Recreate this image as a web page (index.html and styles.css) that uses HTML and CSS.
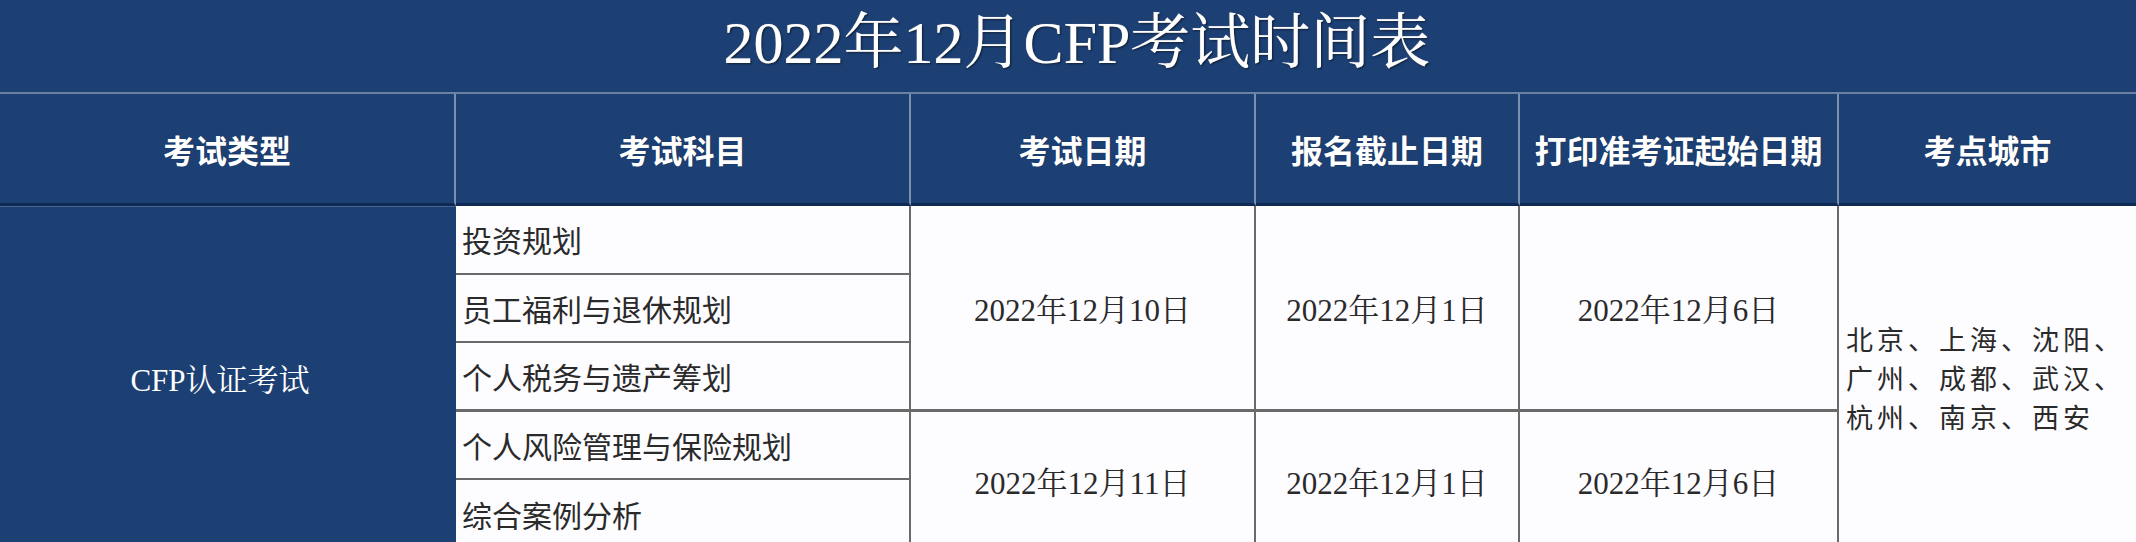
FILE: index.html
```html
<!DOCTYPE html>
<html lang="zh-CN">
<head>
<meta charset="utf-8">
<title>2022年12月CFP考试时间表</title>
<link rel="stylesheet" href="styles.css">
</head>
<body>
<div class="sheet">
  <div class="title">2022年12月CFP考试时间表</div>
  <div class="grid">
    <div class="hd">考试类型</div>
    <div class="hd">考试科目</div>
    <div class="hd">考试日期</div>
    <div class="hd">报名截止日期</div>
    <div class="hd">打印准考证起始日期</div>
    <div class="hd last">考点城市</div>

    <div class="type">CFP认证考试</div>

    <div class="subj r1">投资规划</div>
    <div class="subj r2">员工福利与退休规划</div>
    <div class="subj r3 sep">个人税务与遗产筹划</div>
    <div class="subj r4">个人风险管理与保险规划</div>
    <div class="subj r5">综合案例分析</div>

    <div class="date c3 g1 sep">2022年12月10日</div>
    <div class="date c4 g1 sep">2022年12月1日</div>
    <div class="date c5 g1 sep">2022年12月6日</div>

    <div class="date c3 g2">2022年12月11日</div>
    <div class="date c4 g2">2022年12月1日</div>
    <div class="date c5 g2">2022年12月6日</div>

    <div class="cities">北京、上海、沈阳、<br>广州、成都、武汉、<br>杭州、南京、西安</div>
  </div>
</div>
</body>
</html>
```

FILE: styles.css
```css
html, body {
  margin: 0;
  padding: 0;
  background: #ffffff;
}

.sheet {
  width: 2136px;
  font-family: "Liberation Serif", "Noto Serif CJK SC", "Noto Sans CJK SC", serif;
}

.title {
  height: 92px;
  background: #1c3f74;
  color: #ffffff;
  font-size: 60px;
  line-height: 86px;
  text-align: center;
  padding-left: 18px;
  border-bottom: 2px solid #6c80a4;
  text-shadow: 1px 1px 2px rgba(0, 0, 0, 0.6), 0 0 1px rgba(255, 255, 255, 0.6);
}

.grid {
  display: grid;
  grid-template-columns: 456px 455px 345px 264px 319px 1fr;
  grid-template-rows: 112px repeat(5, 68.6px);
}

.hd {
  background: #1c3f74;
  color: #ffffff;
  font-family: "Noto Sans CJK SC", sans-serif;
  font-weight: 700;
  font-size: 32px;
  display: flex;
  align-items: center;
  justify-content: center;
  border-right: 2px solid #7d8fae;
  border-bottom: 3px solid #0f2a52;
  box-sizing: border-box;
  text-shadow: 0 0 1px rgba(0, 0, 0, 0.4);
}

.hd.last {
  border-right: none;
}

.type {
  grid-column: 1;
  grid-row: 2 / span 5;
  background: #1c3f74;
  color: #ffffff;
  font-size: 31px;
  display: flex;
  align-items: center;
  justify-content: center;
  padding-right: 16px;
  border-top: 1px solid #4a6390;
  box-sizing: border-box;
}

.subj {
  grid-column: 2;
  background: #fdfcff;
  color: #2a2a2a;
  font-family: "Noto Sans CJK SC", sans-serif;
  font-size: 30px;
  display: flex;
  align-items: center;
  padding-left: 6px;
  border-bottom: 2px solid #6a6a6a;
  border-right: 2px solid #6a6a6a;
  box-sizing: border-box;
}

.subj.sep {
  border-bottom-width: 3px;
}

.r1 { grid-row: 2; }
.r2 { grid-row: 3; }
.r3 { grid-row: 4; }
.r4 { grid-row: 5; }
.r5 { grid-row: 6; }

.date {
  background: #fdfcff;
  color: #2a2a2a;
  font-size: 31px;
  display: flex;
  align-items: center;
  justify-content: center;
  border-right: 2px solid #6a6a6a;
  box-sizing: border-box;
}

.date.sep {
  border-bottom: 3px solid #6a6a6a;
}

.c3 { grid-column: 3; }
.c4 { grid-column: 4; }
.c5 { grid-column: 5; }
.g1 { grid-row: 2 / span 3; }
.g2 { grid-row: 5 / span 2; }

.cities {
  grid-column: 6;
  grid-row: 2 / span 5;
  background: #fdfcff;
  color: #2a2a2a;
  font-family: "Noto Sans CJK SC", sans-serif;
  font-size: 27px;
  letter-spacing: 4px;
  line-height: 39px;
  display: flex;
  align-items: center;
  padding-left: 7px;
  box-sizing: border-box;
}
```
